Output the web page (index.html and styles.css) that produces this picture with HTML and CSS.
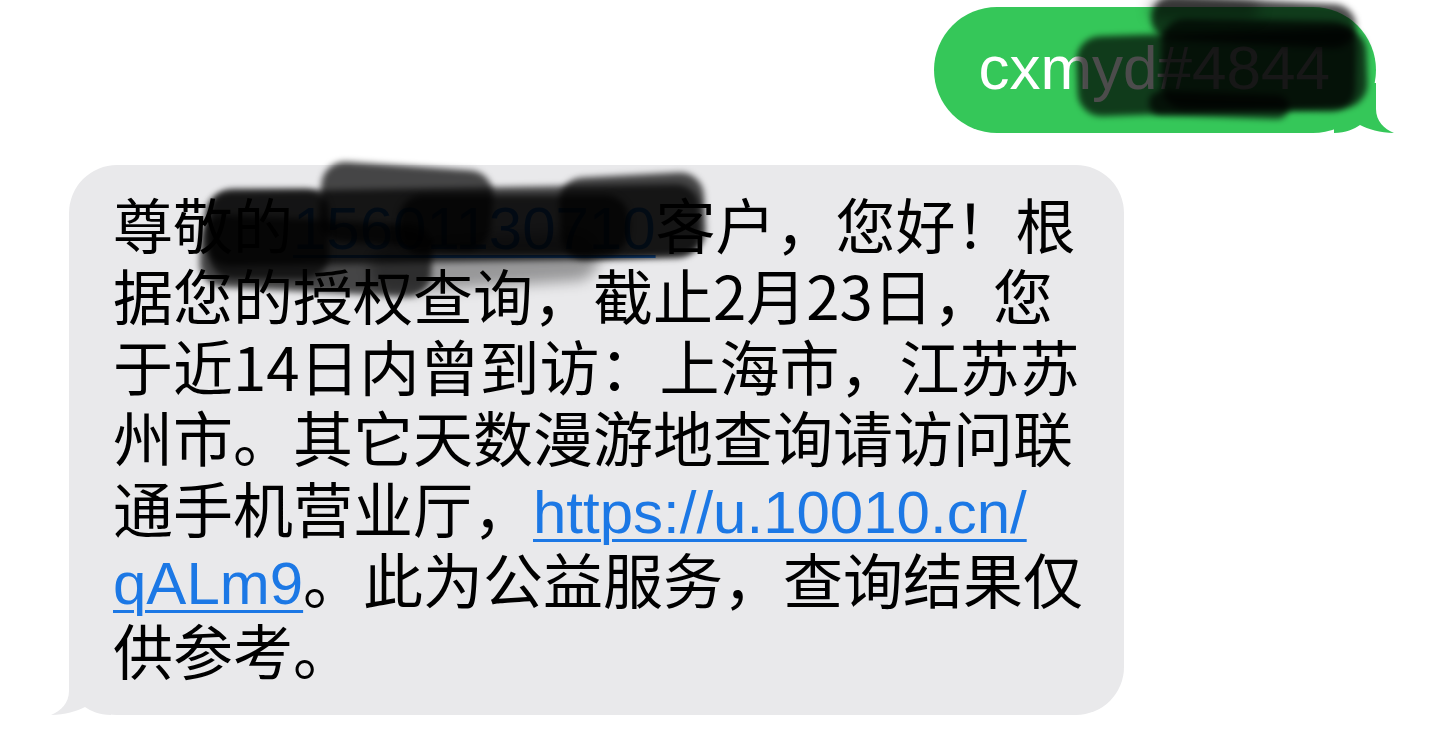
FILE: index.html
```html
<!DOCTYPE html>
<html lang="zh-CN">
<head>
    <meta charset="UTF-8">
    <meta name="viewport" content="width=device-width, initial-scale=1.0">
    <title>信息</title>
    <link rel="stylesheet" href="styles.css">
</head>
<body>
    <div class="thread">
        <div class="row row-out">
            <div class="bubble bubble-out">
                <span class="out-text">cxmyd#4844</span>
                <svg class="tail tail-out" viewBox="0 0 60 50" aria-hidden="true">
                    <path d="M18 0 L18 26 C18 38 10 46 0 50 C14 50 26 46 34 42 C40 46 48 50 60 50 L60 0 Z"/>
                </svg>
                <div class="scribble">
                    <span class="blob" style="left:143px;top:25px;width:290px;height:80px;transform:rotate(-2deg)"></span>
                    <span class="blob" style="left:217px;top:-7px;width:205px;height:44px;transform:rotate(3deg)"></span>
                    <span class="blob" style="left:227px;top:13px;width:195px;height:90px;transform:rotate(1deg)"></span>
                    <span class="blob" style="left:215px;top:86px;width:140px;height:24px;transform:rotate(2deg)"></span>
                    <span class="blob soft" style="left:215px;top:-7px;width:110px;height:18px"></span>
                </div>
            </div>
        </div>

        <div class="row row-in">
            <div class="bubble bubble-in">
                <p class="in-text">尊敬的<a class="link">15601130710</a>客户，您好！根<br>据您的授权查询，截止2月23日，您<br>于近14日内曾到访：上海市，江苏苏<br>州市。其它天数漫游地查询请访问联<br>通手机营业厅，<a class="link">https://u.10010.cn/<br>qALm9</a>。此为公益服务，查询结果仅<br>供参考。</p>
                <svg class="tail tail-in" viewBox="0 0 60 50" aria-hidden="true">
                    <path d="M18 0 L18 26 C18 38 10 46 0 50 C14 50 26 46 34 42 C40 46 48 50 60 50 L60 0 Z"/>
                </svg>
                <div class="scribble">
                    <span class="blob" style="left:136px;top:23px;width:495px;height:74px;transform:rotate(-1deg)"></span>
                    <span class="blob" style="left:251px;top:1px;width:172px;height:80px;transform:rotate(4deg)"></span>
                    <span class="blob" style="left:491px;top:10px;width:145px;height:82px;transform:rotate(-3deg)"></span>
                    <span class="blob" style="left:131px;top:55px;width:232px;height:72px;transform:rotate(3deg)"></span>
                    <span class="blob" style="left:140px;top:24px;width:120px;height:90px"></span>
                    <span class="blob" style="left:330px;top:30px;width:230px;height:60px"></span>
                    <span class="blob soft" style="left:300px;top:72px;width:230px;height:50px;transform:rotate(-4deg)"></span>
                </div>
            </div>
        </div>
    </div>
</body>
</html>
```

FILE: styles.css
```css
body {
    margin: 0;
    background: #fff;
    font-family: "Noto Sans CJK SC", sans-serif;
    color: #000;
}

.thread {
    display: flex;
    flex-direction: column;
    gap: 32px;
    padding: 7px 72px 0 69px;
}

.row {
    display: flex;
}

.row-out {
    justify-content: flex-end;
}

.row-in {
    justify-content: flex-start;
}

.bubble {
    position: relative;
    border-radius: 48px;
}

.bubble-out {
    background: #35c759;
    color: #fff;
    border-radius: 63px;
    padding: 26px 46px 30px 44px;
}

.out-text {
    display: block;
    font-family: "Liberation Sans", sans-serif;
    font-size: 62px;
    line-height: 70px;
}

.bubble-in {
    background: #e9e9eb;
    width: 1011px;
    padding: 22px 0 31px 44px;
}

.in-text {
    margin: 0;
    font-size: 60px;
    line-height: 71px;
}

.link {
    color: #1c78e5;
    font-family: "Liberation Sans", sans-serif;
    line-height: 50px;
    text-decoration: underline;
    text-decoration-thickness: 3px;
    text-underline-offset: 6px;
}

.tail {
    position: absolute;
    bottom: 0;
    width: 60px;
    height: 50px;
}

.tail-in {
    left: -18px;
    fill: #e9e9eb;
}

.tail-out {
    right: -18px;
    fill: #35c759;
    transform: scaleX(-1);
}

/* marker scribble over the private bits */
.scribble {
    position: absolute;
    inset: 0;
    pointer-events: none;
}

.blob {
    position: absolute;
    background: rgba(0, 0, 0, 0.7);
    border-radius: 24px;
    filter: blur(3px);
}

.blob.soft {
    background: rgba(0, 0, 0, 0.35);
    filter: blur(7px);
}
```
